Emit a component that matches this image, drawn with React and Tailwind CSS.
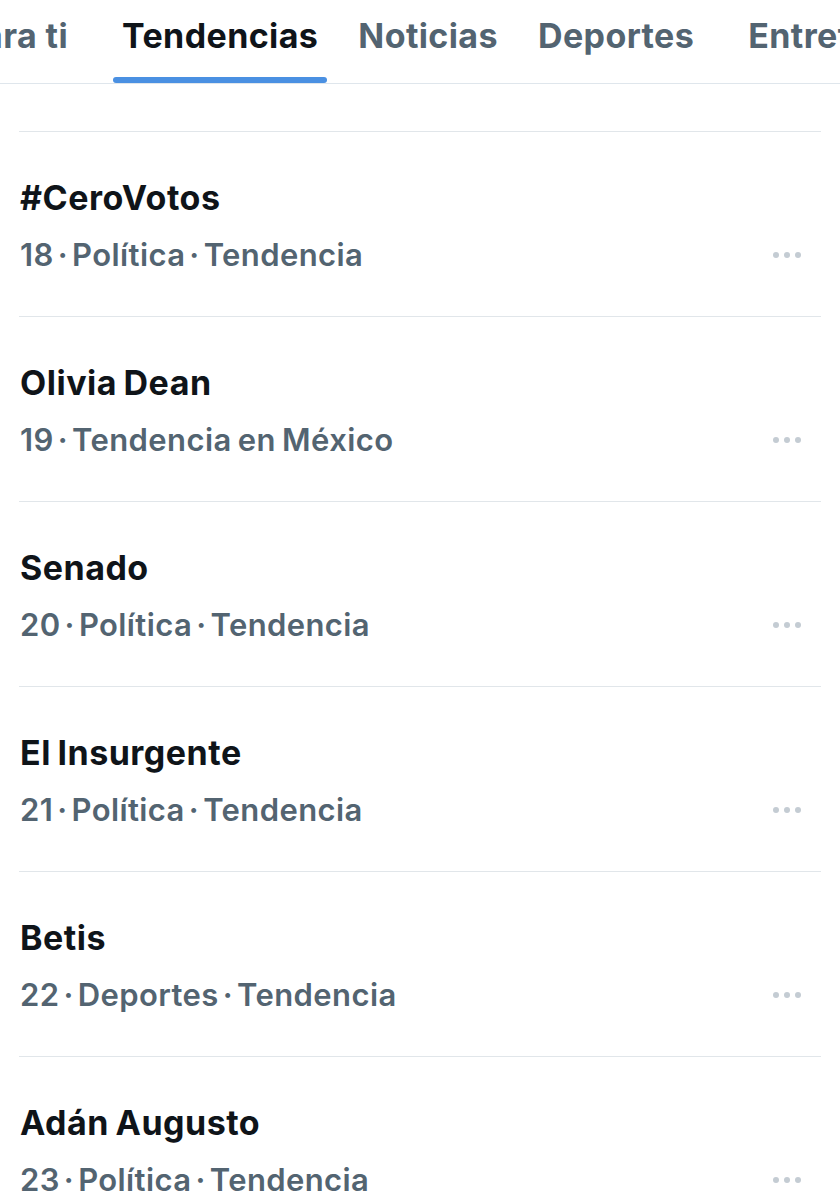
const TABS = [
  { label: 'Para ti', active: false, cls: 'w-[113px] pr-[45px] justify-end' },
  { label: 'Tendencias', active: true, cls: 'px-[9px]' },
  { label: 'Noticias', active: false, cls: 'pl-[31px] pr-[40px]' },
  { label: 'Deportes', active: false, cls: 'pr-[54px]' },
  { label: 'Entretenimiento', active: false, cls: '' },
];

const TRENDS = [
  { rank: 18, title: '#CeroVotos', meta: ['Política', 'Tendencia'] },
  { rank: 19, title: 'Olivia Dean', meta: ['Tendencia en México'] },
  { rank: 20, title: 'Senado', meta: ['Política', 'Tendencia'] },
  { rank: 21, title: 'El Insurgente', meta: ['Política', 'Tendencia'] },
  { rank: 22, title: 'Betis', meta: ['Deportes', 'Tendencia'] },
  { rank: 23, title: 'Adán Augusto', meta: ['Política', 'Tendencia'] },
];

function Dots() {
  return (
    <div className="flex items-center gap-[5px] pr-[20px]">
      <span className="w-[6px] h-[6px] rounded-full bg-[#c4ccd3]" />
      <span className="w-[6px] h-[6px] rounded-full bg-[#c4ccd3]" />
      <span className="w-[6px] h-[6px] rounded-full bg-[#c4ccd3]" />
    </div>
  );
}

function TrendRow({ trend }) {
  return (
    <div className="border-t border-[#e1e6ea] pt-[46px] pb-[41px]">
      <div className="pl-px text-[34px] leading-[40px] font-bold text-[#0f1419] tracking-[0.5px] [word-spacing:-2px]">
        {trend.title}
      </div>
      <div className="mt-[17px] flex items-center justify-between">
        <div className="pl-px text-[31px] leading-[40px] font-semibold text-[#536471] tracking-[0.4px] [word-spacing:-2px]">
          {trend.rank}
          {trend.meta.map((m) => (
            <span key={m}>
              <span className="mx-[4px]">·</span>
              {m}
            </span>
          ))}
        </div>
        <Dots />
      </div>
    </div>
  );
}

export default function App() {
  return (
    <div className="w-[840px] h-[1200px] overflow-hidden bg-white font-['Inter',sans-serif]">
      <div className="border-b border-[#dfe6ec] overflow-hidden">
        <div className="flex whitespace-nowrap">
          {TABS.map((tab) => (
            <div key={tab.label} className={`flex shrink-0 ${tab.cls}`}>
              <div className="flex flex-col items-stretch">
                <span
                  className={`pt-[14px] text-[34px] leading-[44px] font-bold tracking-[0.4px] ${
                    tab.active ? 'text-[#0f1419]' : 'text-[#536471]'
                  }`}
                >
                  {tab.label}
                </span>
                <span
                  className={`mt-[19px] h-[6px] -mx-[9px] rounded-full ${tab.active ? 'bg-[#4a90e2]' : 'bg-transparent'}`}
                />
              </div>
            </div>
          ))}
        </div>
      </div>
      <div className="mt-[47px] mx-[19px]">
        {TRENDS.map((t) => (
          <TrendRow key={t.rank} trend={t} />
        ))}
      </div>
    </div>
  );
}
